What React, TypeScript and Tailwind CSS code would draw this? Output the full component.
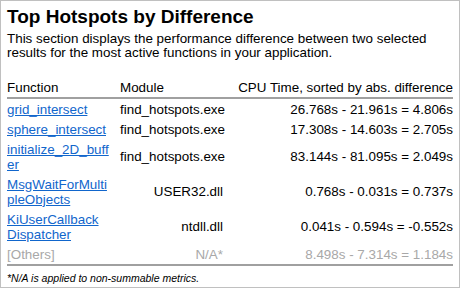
import React from "react";

const rows = [
  { fn: ["grid_intersect"], mod: "find_hotspots.exe", cpu: "26.768s - 21.961s = 4.806s" },
  { fn: ["sphere_intersect"], mod: "find_hotspots.exe", cpu: "17.308s - 14.603s = 2.705s" },
  { fn: ["initialize_2D_buff", "er"], mod: "find_hotspots.exe", cpu: "83.144s - 81.095s = 2.049s" },
  { fn: ["MsgWaitForMulti", "pleObjects"], mod: "USER32.dll", cpu: "0.768s - 0.031s = 0.737s" },
  { fn: ["KiUserCallback", "Dispatcher"], mod: "ntdll.dll", cpu: "0.041s - 0.594s = -0.552s" },
];

export default function App() {
  return (
    <div className="w-[460px] h-[288px] overflow-hidden border border-[#c0c0c0] bg-white px-[6px] pt-[5px] text-black font-['Liberation_Sans',Arial,sans-serif]">
      <h1 className="text-[19px] font-bold leading-[22px]">Top Hotspots by Difference</h1>
      <p className="mt-[4px] text-[13.4px] leading-[14px]">
        This section displays the performance difference between two selected results for the most active functions in your application.
      </p>
      <table className="mt-[17px] w-full table-fixed border-collapse text-[13.4px] leading-[15px]">
        <colgroup>
          <col className="w-[113px]" />
          <col className="w-[110px]" />
          <col />
        </colgroup>
        <thead>
          <tr className="border-b-2 border-[#a0a0a0]">
            <th className="py-[2.5px] text-left font-normal">Function</th>
            <th className="py-[2.5px] pr-[7px] text-left font-normal">Module</th>
            <th className="py-[2.5px] text-right font-normal whitespace-nowrap">CPU Time, sorted by abs. difference</th>
          </tr>
        </thead>
        <tbody>
          {rows.map((r) => (
            <tr key={r.fn.join("")}>
              <td className="py-[2.5px] align-middle whitespace-nowrap">
                <a href="#" className="text-[#1166cc] underline">
                  {r.fn.map((part, i) => (
                    <React.Fragment key={i}>
                      {i > 0 && <br />}
                      {part}
                    </React.Fragment>
                  ))}
                </a>
              </td>
              <td className="py-[2.5px] pr-[7px] text-right align-middle whitespace-nowrap">{r.mod}</td>
              <td className="py-[2.5px] text-right align-middle whitespace-nowrap">{r.cpu}</td>
            </tr>
          ))}
          <tr className="border-b-2 border-[#a0a0a0] text-[#a8a8a8]">
            <td className="py-[2.5px]">[Others]</td>
            <td className="py-[2.5px] pr-[7px] text-right">N/A*</td>
            <td className="py-[2.5px] text-right">8.498s - 7.314s = 1.184s</td>
          </tr>
        </tbody>
      </table>
      <p className="mt-[6px] text-[10.5px] italic leading-[13px]">*N/A is applied to non-summable metrics.</p>
    </div>
  );
}
